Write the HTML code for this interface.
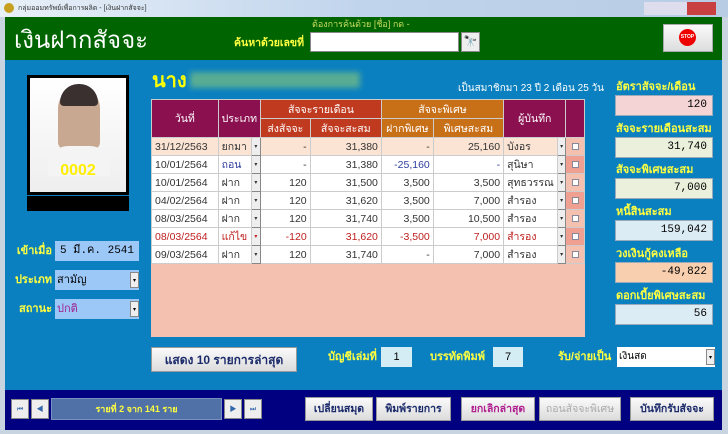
<!DOCTYPE html>
<html><head><meta charset="utf-8"><style>
*{margin:0;padding:0;box-sizing:border-box}
body{width:728px;height:434px;overflow:hidden;background:#c8d4e0;font-family:"Liberation Sans","Noto Sans CJK SC",sans-serif;position:relative}
.a{position:absolute}
.yl{color:#ffff40;font-weight:bold;font-size:11px;line-height:14px;white-space:nowrap}
.box{position:absolute;border:1px solid #9ab;font-family:"Liberation Mono","DejaVu Sans Mono",monospace;font-size:11px;text-align:right;padding:3px 5px 0 0}
.btn{position:absolute;background:linear-gradient(#fafafa,#dcdcdc);border:1px solid #999;font-size:11px;text-align:center;color:#1a2a6a;font-weight:bold;line-height:22px;white-space:nowrap;overflow:hidden}
table{border-collapse:collapse;font-size:10.5px}
td{border:1px solid #ccc;height:17.5px;padding:0 3px;white-space:nowrap}
.dd{width:9px;background:#eee;border:1px solid #888;font-size:6px;text-align:center;padding:0}
.ck{width:19px;text-align:center;padding:0}
.ck span{display:inline-block;width:7px;height:7px;border:1px solid #889;background:#fff}
.r{text-align:right}
.lb{text-align:right;width:50px}
</style></head><body>
<div class="a" style="left:0;top:0;width:728px;height:17px;background:linear-gradient(90deg,#e8f0f8,#c0d4ec 50%,#b8cce4)"></div>
<div class="a" style="left:4px;top:3px;width:10px;height:10px;border-radius:50%;background:#c8a020"></div>
<div class="a" style="left:18px;top:3px;font-size:7px;color:#333">กลุ่มออมทรัพย์เพื่อการผลิต - [เงินฝากสัจจะ]</div>
<div class="a" style="left:644px;top:2px;width:72px;height:13px;background:linear-gradient(90deg,#dde,#dde 60%,#c84040 60%)"></div>
<div class="a" style="left:5px;top:17px;width:717px;height:43px;background:#006400"></div>
<div class="a" style="left:14px;top:24px;font-size:24px;color:#fff;line-height:34px">เงินฝากสัจจะ</div>
<div class="a" style="left:312px;top:17px;font-size:9px;color:#ccdd60">ต้องการค้นด้วย [ชื่อ] กด -</div>
<div class="a yl" style="left:234px;top:36px;font-size:10.5px">ค้นหาด้วยเลขที่</div>
<div class="a" style="left:310px;top:32px;width:149px;height:20px;background:#fff;border:1px solid #888"></div>
<div class="a" style="left:461px;top:32px;width:19px;height:20px;background:#eee;border:1px solid #888;font-size:11px;text-align:center;line-height:18px">🔭</div>
<div class="a" style="left:663px;top:24px;width:50px;height:28px;background:linear-gradient(#fafafa,#ddd);border:1px solid #aaa"></div>
<div class="a" style="left:679px;top:29px;width:17px;height:17px;border-radius:50%;background:#e00;color:#fff;font-size:5px;font-weight:bold;text-align:center;line-height:17px">STOP</div>
<div class="a" style="left:5px;top:60px;width:717px;height:330px;background:#0a80c0"></div>
<div class="a" style="left:5px;top:390px;width:717px;height:40px;background:#000080"></div>
<div class="a" style="left:27px;top:75px;width:102px;height:120px;background:#000;padding:3px"><div style="width:96px;height:114px;background:linear-gradient(#fff,#eee);position:relative">
<div class="a" style="left:28px;top:10px;width:42px;height:62px;border-radius:20px 20px 8px 8px;background:#c8a890"></div>
<div class="a" style="left:30px;top:6px;width:38px;height:22px;border-radius:20px 20px 4px 4px;background:#3a3030"></div>
<div class="a" style="left:18px;top:68px;width:62px;height:30px;border-radius:20px 20px 0 0;background:#f4f4f4"></div>
<div class="a" style="left:0;top:84px;width:96px;text-align:center;color:#ffee00;font-weight:bold;font-size:16px">0002</div>
</div></div>
<div class="a" style="left:27px;top:196px;width:102px;height:15px;background:#000"></div>
<div class="a yl lb" style="left:2px;top:244px">เข้าเมื่อ</div>
<div class="a" style="left:55px;top:241px;width:84px;height:20px;background:#9cc8f8;font-family:'Liberation Mono',monospace;font-size:11px;text-align:center;line-height:20px">5 มี.ค. 2541</div>
<div class="a yl lb" style="left:2px;top:273px">ประเภท</div>
<div class="a" style="left:55px;top:270px;width:84px;height:20px;background:#9cc8f8;font-size:11px;line-height:20px;padding-left:2px">สามัญ</div>
<div class="a dd" style="left:130px;top:272px;height:16px;line-height:16px">▾</div>
<div class="a yl lb" style="left:2px;top:302px">สถานะ</div>
<div class="a" style="left:55px;top:299px;width:84px;height:20px;background:#9cc8f8;font-size:11px;line-height:20px;padding-left:2px;color:#a02090">ปกติ</div>
<div class="a dd" style="left:130px;top:301px;height:16px;line-height:16px">▾</div>
<div class="a" style="left:152px;top:67px;font-size:20px;font-weight:bold;color:#ffff00;line-height:28px">นาง</div>
<div class="a" style="left:190px;top:72px;width:170px;height:16px;background:#6cb888;filter:blur(3px);opacity:.8"></div>
<div class="a" style="left:458px;top:81px;font-size:10px;color:#fff">เป็นสมาชิกมา 23 ปี 2 เดือน 25 วัน</div>
<div class="a" style="left:151px;top:99px;width:434px;height:238px;background:#f4c0b0"></div>
<table class="a" style="left:151px;top:99px;width:434px;color:#333">
<tr style="color:#fff;height:19px"><td rowspan="2" style="background:#8b1050;text-align:center;width:67px">วันที่</td><td rowspan="2" colspan="2" style="background:#8b1050;text-align:center">ประเภท</td><td colspan="2" style="background:#c03a20;text-align:center">สัจจะรายเดือน</td><td colspan="2" style="background:#c87018;text-align:center">สัจจะพิเศษ</td><td colspan="2" rowspan="2" style="background:#8b1050;text-align:center">ผู้บันทึก</td><td rowspan="2" style="background:#8b1050"></td></tr>
<tr style="color:#fff;height:19px"><td style="background:#c03a20;text-align:center;width:50px">ส่งสัจจะ</td><td style="background:#c03a20;text-align:center;width:72px">สัจจะสะสม</td><td style="background:#c87018;text-align:center;width:52px">ฝากพิเศษ</td><td style="background:#c87018;text-align:center;width:71px">พิเศษสะสม</td></tr>
<tr style="background:#fbe4d4"><td>31/12/2563</td><td style="width:31px">ยกมา</td><td class="dd">▾</td><td class="r">-</td><td class="r">31,380</td><td class="r">-</td><td class="r">25,160</td><td style="width:52px">บังอร</td><td class="dd">▾</td><td class="ck" style="background:#f4c0b0"><span></span></td></tr>
<tr style="background:#fff"><td>10/01/2564</td><td style="color:#3040a0">ถอน</td><td class="dd">▾</td><td class="r">-</td><td class="r">31,380</td><td class="r" style="color:#3040a0">-25,160</td><td class="r" style="color:#3040a0">-</td><td>สุนิษา</td><td class="dd">▾</td><td class="ck" style="background:#f0a090"><span></span></td></tr>
<tr style="background:#fff"><td>10/01/2564</td><td>ฝาก</td><td class="dd">▾</td><td class="r">120</td><td class="r">31,500</td><td class="r">3,500</td><td class="r">3,500</td><td>สุทธวรรณ</td><td class="dd">▾</td><td class="ck" style="background:#f4c0b0"><span></span></td></tr>
<tr style="background:#fff"><td>04/02/2564</td><td>ฝาก</td><td class="dd">▾</td><td class="r">120</td><td class="r">31,620</td><td class="r">3,500</td><td class="r">7,000</td><td>สำรอง</td><td class="dd">▾</td><td class="ck" style="background:#f0a090"><span></span></td></tr>
<tr style="background:#fff"><td>08/03/2564</td><td>ฝาก</td><td class="dd">▾</td><td class="r">120</td><td class="r">31,740</td><td class="r">3,500</td><td class="r">10,500</td><td>สำรอง</td><td class="dd">▾</td><td class="ck" style="background:#f4c0b0"><span></span></td></tr>
<tr style="background:#fff;color:#c02020"><td>08/03/2564</td><td>แก้ไข</td><td class="dd">▾</td><td class="r">-120</td><td class="r">31,620</td><td class="r">-3,500</td><td class="r">7,000</td><td>สำรอง</td><td class="dd" style="color:#333">▾</td><td class="ck" style="background:#f0a090"><span></span></td></tr>
<tr style="background:#fff"><td>09/03/2564</td><td>ฝาก</td><td class="dd">▾</td><td class="r">120</td><td class="r">31,740</td><td class="r">-</td><td class="r">7,000</td><td>สำรอง</td><td class="dd">▾</td><td class="ck" style="background:#f4c0b0"><span></span></td></tr>
</table>
<div class="a yl" style="left:616px;top:80px">อัตราสัจจะ/เดือน</div>
<div class="box" style="left:615px;top:95px;width:98px;height:21px;background:#f4d4d4">120</div>
<div class="a yl" style="left:616px;top:122px">สัจจะรายเดือนสะสม</div>
<div class="box" style="left:615px;top:137px;width:98px;height:21px;background:#eaf0dc">31,740</div>
<div class="a yl" style="left:616px;top:163px">สัจจะพิเศษสะสม</div>
<div class="box" style="left:615px;top:178px;width:98px;height:21px;background:#eaf0dc">7,000</div>
<div class="a yl" style="left:616px;top:205px">หนี้สินสะสม</div>
<div class="box" style="left:615px;top:220px;width:98px;height:21px;background:#dcecf4">159,042</div>
<div class="a yl" style="left:616px;top:247px">วงเงินกู้คงเหลือ</div>
<div class="box" style="left:615px;top:262px;width:98px;height:21px;background:#f8d0b0">-49,822</div>
<div class="a yl" style="left:616px;top:289px">ดอกเบี้ยพิเศษสะสม</div>
<div class="box" style="left:615px;top:304px;width:98px;height:21px;background:#dcecf4">56</div>
<div class="btn" style="left:151px;top:347px;width:146px;height:25px;line-height:24px;font-size:12px">แสดง 10 รายการล่าสุด</div>
<div class="a yl" style="left:328px;top:350px">บัญชีเล่มที่</div>
<div class="a" style="left:381px;top:347px;width:31px;height:20px;background:#d4ecf4;font-size:11px;text-align:center;line-height:20px">1</div>
<div class="a yl" style="left:430px;top:350px">บรรทัดพิมพ์</div>
<div class="a" style="left:493px;top:347px;width:30px;height:20px;background:#d4ecf4;font-size:11px;text-align:center;line-height:20px">7</div>
<div class="a yl" style="left:558px;top:350px">รับ/จ่ายเป็น</div>
<div class="a" style="left:617px;top:347px;width:98px;height:20px;background:#fff;font-size:10px;line-height:20px;padding-left:2px">เงินสด</div>
<div class="a dd" style="left:706px;top:349px;height:16px;line-height:16px">▾</div>
<div class="a dd" style="left:11px;top:399px;width:18px;height:20px;line-height:20px;font-size:7px;color:#36a">⏮</div>
<div class="a dd" style="left:31px;top:399px;width:18px;height:20px;line-height:20px;font-size:7px;color:#36a">◀</div>
<div class="a" style="left:51px;top:398px;width:171px;height:22px;background:#5070a8;border:1px solid #7890c0;color:#ffff40;font-size:9px;text-align:center;line-height:20px;font-weight:bold">รายที่ 2 จาก 141 ราย</div>
<div class="a dd" style="left:224px;top:399px;width:18px;height:20px;line-height:20px;font-size:7px;color:#36a">▶</div>
<div class="a dd" style="left:244px;top:399px;width:18px;height:20px;line-height:20px;font-size:7px;color:#36a">⏭</div>
<div class="btn" style="left:305px;top:397px;width:68px;height:24px;font-size:10.5px">เปลี่ยนสมุด</div>
<div class="btn" style="left:376px;top:397px;width:75px;height:24px;font-size:10.5px">พิมพ์รายการ</div>
<div class="btn" style="left:461px;top:397px;width:74px;height:24px;color:#b02090;font-size:10.5px">ยกเลิกล่าสุด</div>
<div class="btn" style="left:539px;top:397px;width:82px;height:24px;color:#aaa;font-weight:normal;font-size:10.5px">ถอนสัจจะพิเศษ</div>
<div class="btn" style="left:630px;top:397px;width:84px;height:24px;font-size:10.5px">บันทึกรับสัจจะ</div>
</body></html>
